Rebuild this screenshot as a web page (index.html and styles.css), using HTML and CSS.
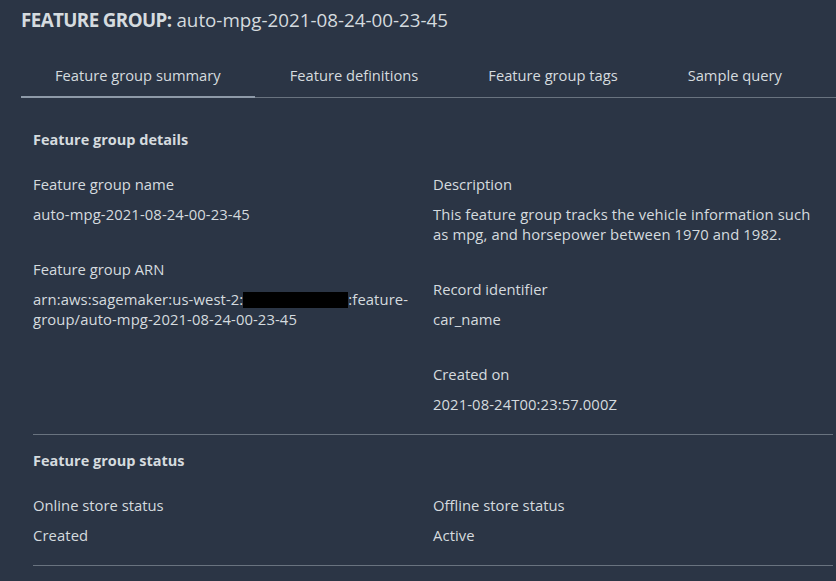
FILE: index.html
```html
<!DOCTYPE html>
<html lang="en">
<head>
<meta charset="utf-8">
<title>Feature group</title>
<link rel="stylesheet" href="styles.css">
</head>
<body>
<div class="page">
  <h1 class="title"><span class="title-key">FEATURE GROUP:</span> auto-mpg-2021-08-24-00-23-45</h1>
  <nav class="tabs">
    <span class="tab tab-active">Feature group summary</span>
    <span class="tab">Feature definitions</span>
    <span class="tab">Feature group tags</span>
    <span class="tab">Sample query</span>
  </nav>
  <section class="panel panel-details">
    <h2 class="panel-title">Feature group details</h2>
    <div class="cols">
      <div class="col">
        <div class="item">
          <div class="label">Feature group name</div>
          <div class="value">auto-mpg-2021-08-24-00-23-45</div>
        </div>
        <div class="item">
          <div class="label">Feature group ARN</div>
          <div class="value">arn:aws:sagemaker:us-west-2:<span class="redact"></span>:feature-group/auto-mpg-2021-08-24-00-23-45</div>
        </div>
      </div>
      <div class="col">
        <div class="item">
          <div class="label">Description</div>
          <div class="value">This feature group tracks the vehicle information such as mpg, and horsepower between 1970 and 1982.</div>
        </div>
        <div class="item">
          <div class="label">Record identifier</div>
          <div class="value">car_name</div>
        </div>
        <div class="item">
          <div class="label">Created on</div>
          <div class="value">2021-08-24T00:23:57.000Z</div>
        </div>
      </div>
    </div>
  </section>
  <section class="panel panel-status">
    <h2 class="panel-title">Feature group status</h2>
    <div class="cols">
      <div class="col">
        <div class="item">
          <div class="label">Online store status</div>
          <div class="value">Created</div>
        </div>
      </div>
      <div class="col">
        <div class="item">
          <div class="label">Offline store status</div>
          <div class="value">Active</div>
        </div>
      </div>
    </div>
  </section>
</div>
</body>
</html>
```

FILE: styles.css
```css
* { box-sizing: border-box; }
html, body {
  margin: 0;
  padding: 0;
  background: #2b3545;
}
body {
  font-family: "Open Sans", "Noto Sans", sans-serif;
  color: #d5dbdf;
  font-size: 14.8px;
  line-height: 20px;
}
.page {
  padding-top: 8px;
}
.title {
  margin: 0 0 0 21px;
  font-size: 18.8px;
  line-height: 24px;
  font-weight: 400;
  color: #d5dbdf;
}
.title-key {
  font-weight: 700;
  letter-spacing: -0.6px;
}
.tabs {
  display: flex;
  margin: 24px 0 0 21px;
  border-bottom: 1px solid #69737f;
}
.tab {
  padding: 9px 35px 11px;
  font-size: 14.7px;
  line-height: 20px;
  margin-bottom: -1px;
  border-bottom: 2px solid transparent;
  white-space: nowrap;
}
.tab:first-child {
  padding-left: 34px;
  padding-right: 34px;
}
.tab-active {
  border-bottom-color: #8e9aa8;
}
.panel {
  margin: 0 3px 0 33px;
  border-bottom: 1px solid #69737f;
  padding-bottom: 20px;
}
.panel-details {
  padding-top: 32px;
}
.panel-status {
  padding-top: 16px;
}
.panel-title {
  margin: 0 0 24px 0;
  font-size: 14.5px;
  line-height: 20px;
  font-weight: 700;
}
.cols {
  display: grid;
  grid-template-columns: 400px 1fr;
}
.col {
  display: flex;
  flex-direction: column;
  gap: 35px;
  padding-right: 22px;
}
.item {
  display: flex;
  flex-direction: column;
  gap: 10px;
}
.label, .value {
  line-height: 20px;
}
.value {
  letter-spacing: 0.1px;
}
.redact {
  display: inline-block;
  width: 105px;
  height: 16px;
  background: #000;
  vertical-align: -3px;
}
```
